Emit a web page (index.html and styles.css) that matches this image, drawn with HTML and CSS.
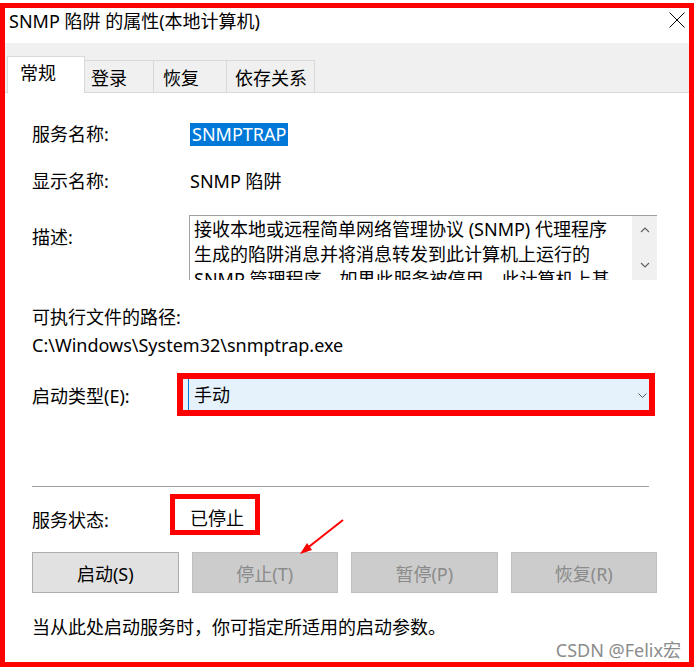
FILE: index.html
```html
<!DOCTYPE html>
<html lang="zh-CN">
<head>
    <meta charset="UTF-8">
    <meta name="viewport" content="width=device-width, initial-scale=1.0">
    <title>SNMP 陷阱 的属性(本地计算机)</title>
    <link rel="stylesheet" href="styles.css">
</head>
<body>
    <div class="dialog">
        <div class="titlebar">
            <span class="title">SNMP 陷阱 的属性(本地计算机)</span>
            <svg class="close" width="16" height="16" viewBox="0 0 16 16">
                <path d="M0.5 0.5 L15.5 15.5 M15.5 0.5 L0.5 15.5" stroke="#000" stroke-width="1" fill="none"/>
            </svg>
        </div>

        <div class="tabs">
            <div class="tab tab-active tab-general">常规</div>
            <div class="tab tab-logon">登录</div>
            <div class="tab tab-recovery">恢复</div>
            <div class="tab tab-deps">依存关系</div>
        </div>

        <div class="panel">
            <div class="field">
                <span class="label">服务名称:</span>
                <span class="value"><span class="selected">SNMPTRAP</span></span>
            </div>

            <div class="field field-display">
                <span class="label">显示名称:</span>
                <span class="value">SNMP 陷阱</span>
            </div>

            <div class="field field-desc">
                <span class="label label-desc">描述:</span>
                <div class="desc-box">
                    <div class="desc-text">
                        <span class="desc-line">接收本地或远程简单网络管理协议 (SNMP) 代理程序</span>
                        <span class="desc-line">生成的陷阱消息并将消息转发到此计算机上运行的</span>
                        <span class="desc-line">SNMP 管理程序。如果此服务被停用，此计算机上基</span>
                    </div>
                    <div class="scrollbar">
                        <svg width="10" height="6" viewBox="0 0 10 6"><path d="M1 5 L5 1 L9 5" stroke="#606060" stroke-width="1.2" fill="none"/></svg>
                        <svg width="10" height="6" viewBox="0 0 10 6"><path d="M1 1 L5 5 L9 1" stroke="#606060" stroke-width="1.2" fill="none"/></svg>
                    </div>
                </div>
            </div>

            <div class="line line-path-label">可执行文件的路径:</div>
            <div class="line line-path">C:\Windows\System32\snmptrap.exe</div>

            <div class="field field-startup">
                <span class="label">启动类型(E):</span>
                <div class="mark-box combo-mark">
                    <div class="combo">
                        <span>手动</span>
                        <svg width="9" height="5" viewBox="0 0 9 5"><path d="M0.5 0.5 L4.5 4.5 L8.5 0.5" stroke="#555" stroke-width="1" fill="none"/></svg>
                    </div>
                </div>
            </div>

            <div class="separator"></div>

            <div class="field field-status">
                <span class="label label-status">服务状态:</span>
                <div class="mark-box status-mark">已停止</div>
            </div>

            <div class="buttons">
                <button class="btn">启动(S)</button>
                <button class="btn" disabled>停止(T)</button>
                <button class="btn" disabled>暂停(P)</button>
                <button class="btn" disabled>恢复(R)</button>
            </div>

            <div class="line hint">当从此处启动服务时，你可指定所适用的启动参数。</div>
        </div>

        <svg class="arrow" width="60" height="50" viewBox="0 0 60 50">
            <line x1="48" y1="7" x2="13" y2="34.5" stroke="#ff0000" stroke-width="2"/>
            <polygon points="5,41 17,37 12,30" fill="#ff0000"/>
        </svg>

        <div class="watermark">CSDN @Felix宏</div>
    </div>
</body>
</html>
```

FILE: styles.css
```css
* {
    box-sizing: border-box;
}

body {
    margin: 0;
    background: #fff;
    font-family: "Noto Sans", "Noto Sans CJK SC", sans-serif;
    font-size: 18px;
    color: #000;
}

.dialog {
    position: relative;
    width: 694px;
    height: 664px;
    margin-top: 3px;
    border: 5px solid #ff0000;
    background: #fff;
}

/* 标题栏 */
.titlebar {
    height: 35px;
    display: flex;
    justify-content: space-between;
    align-items: flex-start;
    padding: 0 4px;
}

.title {
    padding-top: 1px;
    line-height: 24px;
}

.close {
    margin-top: 4px;
}

/* 选项卡 */
.tabs {
    height: 50px;
    display: flex;
    align-items: flex-end;
    padding-left: 2px;
    background: #f0f0f0;
    border-bottom: 1px solid #d9d9d9;
}

.tab {
    height: 32px;
    padding: 5px 0 0 6px;
    line-height: 24px;
    border: 1px solid #d9d9d9;
    border-bottom: none;
    margin-left: -1px;
    background: #f0f0f0;
}

.tab-active {
    height: 37px;
    margin-bottom: -1px;
    margin-left: 0;
    padding: 4px 0 0 12px;
    background: #fff;
    position: relative;
}

.tab-general { width: 78px; }
.tab-logon { width: 70px; }
.tab-recovery { width: 74px; padding-left: 9px; }
.tab-deps { width: 89px; padding-left: 8px; }

/* 内容 */
.panel {
    padding: 29px 32px 0 27px;
}

.field {
    display: grid;
    grid-template-columns: 158px 1fr;
    line-height: 24px;
}

.field-display {
    margin-top: 23px;
}

.selected {
    display: inline-block;
    background: #0078d7;
    color: #fff;
    padding: 0 2px;
    line-height: 23px;
}

.field-desc {
    margin-top: 22px;
    align-items: start;
}

.label-desc {
    margin-top: 10px;
}

.desc-box {
    margin-left: -1px;
    height: 65px;
    display: flex;
    border-top: 1px solid #a0a0a0;
    border-left: 1px solid #a0a0a0;
    overflow: hidden;
}

.desc-text {
    flex: 1;
    padding: 1px 0 0 4px;
    line-height: 25px;
    overflow: hidden;
}

.desc-line {
    display: block;
    white-space: nowrap;
}

.scrollbar {
    width: 25px;
    flex-shrink: 0;
    background: #f0f0f0;
    display: flex;
    flex-direction: column;
    align-items: center;
    padding-top: 11px;
    gap: 29px;
}

.line {
    line-height: 24px;
}

.line-path-label {
    margin-top: 25px;
}

.line-path {
    margin-top: 4px;
}

.field-startup {
    margin-top: 16px;
    grid-template-columns: 145px 478px;
    align-items: center;
}

.field-startup .label {
    padding-top: 3px;
}

.mark-box {
    border: 6px solid #ff0000;
}

.combo-mark {
    height: 43px;
    background: #e5f1fb;
    padding-left: 5px;
}

.combo {
    height: 31px;
    display: flex;
    justify-content: space-between;
    align-items: center;
    padding: 0 2px 0 5px;
    border-left: 1px solid #0078d7;
}

.combo svg {
    margin-top: 2px;
}

.separator {
    margin-top: 70px;
    margin-right: 8px;
    height: 1px;
    background: #a0a0a0;
}

.field-status {
    margin-top: 7px;
    grid-template-columns: 138px auto;
    justify-content: start;
    align-items: start;
}

.label-status {
    margin-top: 14px;
}

.status-mark {
    width: 90px;
    height: 41px;
    border-width: 5px;
    padding: 7px 0 0 15px;
    line-height: 24px;
}

.buttons {
    margin-top: 17px;
    display: grid;
    grid-template-columns: repeat(4, 1fr);
    gap: 13px;
}

.btn {
    height: 41px;
    font-family: inherit;
    font-size: 18px;
    color: #000;
    background: #e1e1e1;
    border: 1px solid #adadad;
    padding: 0;
}

.btn:disabled {
    background: #cccccc;
    border-color: #bfbfbf;
    color: #8a8a8a;
}

.hint {
    margin-top: 22px;
}

.arrow {
    position: absolute;
    left: 290px;
    top: 505px;
}

.watermark {
    position: absolute;
    right: 8px;
    bottom: 2px;
    line-height: 20px;
    color: #8c8c8c;
}
```
